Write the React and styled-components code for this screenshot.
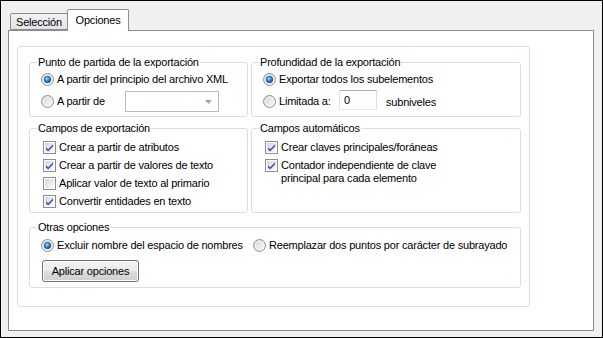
import React from 'react'
import styled, { createGlobalStyle } from 'styled-components'

const GlobalStyle = createGlobalStyle`
  body {
    margin: 0;
    font-family: "Liberation Sans", Arial, sans-serif;
    font-size: 11px;
    color: #000;
  }
`

const Window = styled.div`
  width: 603px;
  height: 338px;
  box-sizing: border-box;
  border: 1px solid #000;
  background: #f0f0f0;
  padding: 8px 0 0 7px;
  letter-spacing: -0.2px;
`

const TabStrip = styled.div`
  display: flex;
  align-items: flex-end;
  height: 21px;
  padding-left: 2px;
  position: relative;
  z-index: 1;
`

const Tab = styled.div`
  box-sizing: border-box;
  display: flex;
  align-items: center;
  justify-content: center;
  width: ${p => p.$w}px;
  height: ${p => (p.$active ? 22 : 17)}px;
  margin-bottom: ${p => (p.$active ? -1 : 0)}px;
  margin-left: ${p => (p.$active ? -1 : 0)}px;
  border: 1px solid #898c95;
  border-bottom: ${p => (p.$active ? 'none' : '1px solid #898c95')};
  border-radius: 2px 2px 0 0;
  background: ${p => (p.$active ? '#fff' : 'linear-gradient(#f2f2f2, #e4e4e4)')};
  padding-top: ${p => (p.$active ? 0 : 1)}px;
  padding-bottom: ${p => (p.$active ? 2 : 0)}px;
  position: relative;
  z-index: ${p => (p.$active ? 2 : 1)};
`

const Panel = styled.div`
  width: 586px;
  height: 301px;
  box-sizing: border-box;
  border: 1px solid #898c95;
  background: #fff;
  padding: 15px 0 0 8px;
`

const InnerBox = styled.div`
  width: 513px;
  height: 261px;
  box-sizing: border-box;
  border: 1px solid #d5dfe5;
  border-radius: 3px;
  padding: 9px 0 0 11px;
  display: grid;
  grid-template-columns: 219px 270px;
  grid-template-rows: 61px 91px 70px;
  column-gap: 3px;
  row-gap: 5px;
  align-content: start;
`

const Group = styled.fieldset`
  margin: ${p => p.$mt || 0}px 0 0 0;
  padding: ${p => p.$pt || 0}px 0 0 7px;
  border: 1px solid #d5dfe5;
  border-radius: 3px;
  min-width: 0;
  box-sizing: border-box;
  grid-column: ${p => (p.$wide ? '1 / span 2' : 'auto')};
`

const Legend = styled.legend`
  padding: 0 1px;
  line-height: 13px;
  font-size: 11px;
`

const Options = styled.div`
  display: flex;
  flex-direction: column;
  margin-left: 4px;
`

const Row = styled.div`
  display: flex;
  align-items: center;
  height: ${p => p.$h || 18}px;
  margin-top: ${p => p.$mt || 0}px;
`

const Option = styled.label`
  display: flex;
  align-items: center;
  gap: 3px;
  height: 18px;
  width: ${p => (p.$w ? `${p.$w}px` : 'auto')};
  flex: none;
  white-space: nowrap;
`

const Text = styled.span`
  display: inline-block;
  width: ${p => (p.$w ? `${p.$w}px` : 'auto')};
  line-height: 13px;
`

const MultiOption = styled(Option)`
  align-items: flex-start;
  height: auto;
  padding-top: 3px;
  svg {
    margin-top: 0;
  }
`

const Combo = styled.div`
  box-sizing: border-box;
  width: 94px;
  height: 21px;
  margin-left: 3px;
  border: 1px solid #b9bdc3;
  background: #fff;
  display: flex;
  align-items: center;
  justify-content: flex-end;
  padding-right: 6px;
`

const Edit = styled.div`
  box-sizing: border-box;
  width: 38px;
  height: 20px;
  margin-left: 3px;
  margin-top: -3px;
  border: 1px solid #abadb3;
  border-left-color: #e2e3ea;
  border-bottom-color: #e3e9ef;
  border-right-color: #dbdfe6;
  background: #fff;
  padding-left: 4px;
  display: flex;
  align-items: center;
`

const Suffix = styled.span`
  margin-left: 9px;
`

const Button = styled.button`
  box-sizing: border-box;
  width: 97px;
  height: 22px;
  margin: 6px 0 0 1px;
  border: 1px solid #707070;
  border-radius: 3px;
  background: linear-gradient(#f2f2f2 0%, #ebebeb 48%, #dddddd 52%, #cfcfcf 100%);
  box-shadow: inset 0 0 0 1px #fcfcfc;
  font-family: inherit;
  font-size: 11px;
  letter-spacing: -0.2px;
  color: #000;
  padding: 0;
`

const Radio = ({ on }) => (
  <svg width="13" height="13" viewBox="0 0 13 13">
    <defs>
      <linearGradient id="radioBg" x1="0" y1="0" x2="1" y2="1">
        <stop offset="0" stopColor="#d2d2d2" />
        <stop offset="1" stopColor="#fdfdfd" />
      </linearGradient>
      <radialGradient id="radioDot" cx="0.4" cy="0.35" r="0.7">
        <stop offset="0" stopColor="#9fdcff" />
        <stop offset="0.5" stopColor="#2d8ee0" />
        <stop offset="1" stopColor="#0c3f86" />
      </radialGradient>
    </defs>
    <circle cx="6.5" cy="6.5" r="6" fill="url(#radioBg)" stroke="#929292" />
    <circle cx="6.5" cy="6.5" r="4.3" fill="none" stroke="#f4f4f4" strokeWidth="0.8" />
    {on && <circle cx="6.5" cy="6.5" r="3.3" fill="url(#radioDot)" stroke="#1a4a80" strokeWidth="0.7" />}
  </svg>
)

const Check = ({ on }) => (
  <svg width="13" height="13" viewBox="0 0 13 13" style={{ marginLeft: 2 }}>
    <defs>
      <linearGradient id="checkBg" x1="0" y1="0" x2="1" y2="1">
        <stop offset="0" stopColor="#d6d6d6" />
        <stop offset="1" stopColor="#fbfbfb" />
      </linearGradient>
    </defs>
    <rect x="0.5" y="0.5" width="12" height="12" fill="#fff" stroke="#8e8f8f" />
    <rect x="2" y="2" width="9" height="9" fill="url(#checkBg)" />
    {on && <path d="M3 6.2 L5.2 8.3 L10 3.2 L10 5.6 L5.2 10.6 L3 8.4 Z" fill="#3a57b8" />}
  </svg>
)

const Arrow = () => (
  <svg width="7" height="4" viewBox="0 0 7 4">
    <path d="M0 0 H7 L3.5 4 Z" fill="#a6a6a6" />
  </svg>
)

export default function App() {
  return (
    <>
      <GlobalStyle />
      <Window>
        <TabStrip>
          <Tab $w={58}>Selección</Tab>
          <Tab $w={62} $active>Opciones</Tab>
        </TabStrip>
        <Panel>
          <InnerBox>
            <Group $pt={1}>
              <Legend>Punto de partida de la exportación</Legend>
              <Options>
                <Row>
                  <Option><Radio on /><Text>A partir del principio del archivo XML</Text></Option>
                </Row>
                <Row $h={21} $mt={3}>
                  <Option><Radio /><Text $w={65}>A partir de</Text></Option>
                  <Combo><Arrow /></Combo>
                </Row>
              </Options>
            </Group>

            <Group $pt={1}>
              <Legend>Profundidad de la exportación</Legend>
              <Options>
                <Row>
                  <Option><Radio on /><Text>Exportar todos los subelementos</Text></Option>
                </Row>
                <Row $h={21} $mt={3}>
                  <Option><Radio /><Text $w={57}>Limitada a:</Text></Option>
                  <Edit>0</Edit>
                  <Suffix>subniveles</Suffix>
                </Row>
              </Options>
            </Group>

            <Group $pt={3}>
              <Legend>Campos de exportación</Legend>
              <Options>
                <Option><Check on /><Text>Crear a partir de atributos</Text></Option>
                <Option><Check on /><Text>Crear a partir de valores de texto</Text></Option>
                <Option><Check /><Text>Aplicar valor de texto al primario</Text></Option>
                <Option><Check on /><Text>Convertir entidades en texto</Text></Option>
              </Options>
            </Group>

            <Group $pt={3}>
              <Legend>Campos automáticos</Legend>
              <Options>
                <Option><Check on /><Text>Crear claves principales/foráneas</Text></Option>
                <MultiOption>
                  <Check on />
                  <Text>Contador independiente de clave<br />principal para cada elemento</Text>
                </MultiOption>
              </Options>
            </Group>

            <Group $pt={2} $mt={3} $wide>
              <Legend>Otras opciones</Legend>
              <Options>
                <Row>
                  <Option $w={212}><Radio on /><Text>Excluir nombre del espacio de nombres</Text></Option>
                  <Option><Radio /><Text>Reemplazar dos puntos por carácter de subrayado</Text></Option>
                </Row>
                <Button>Aplicar opciones</Button>
              </Options>
            </Group>
          </InnerBox>
        </Panel>
      </Window>
    </>
  )
}
